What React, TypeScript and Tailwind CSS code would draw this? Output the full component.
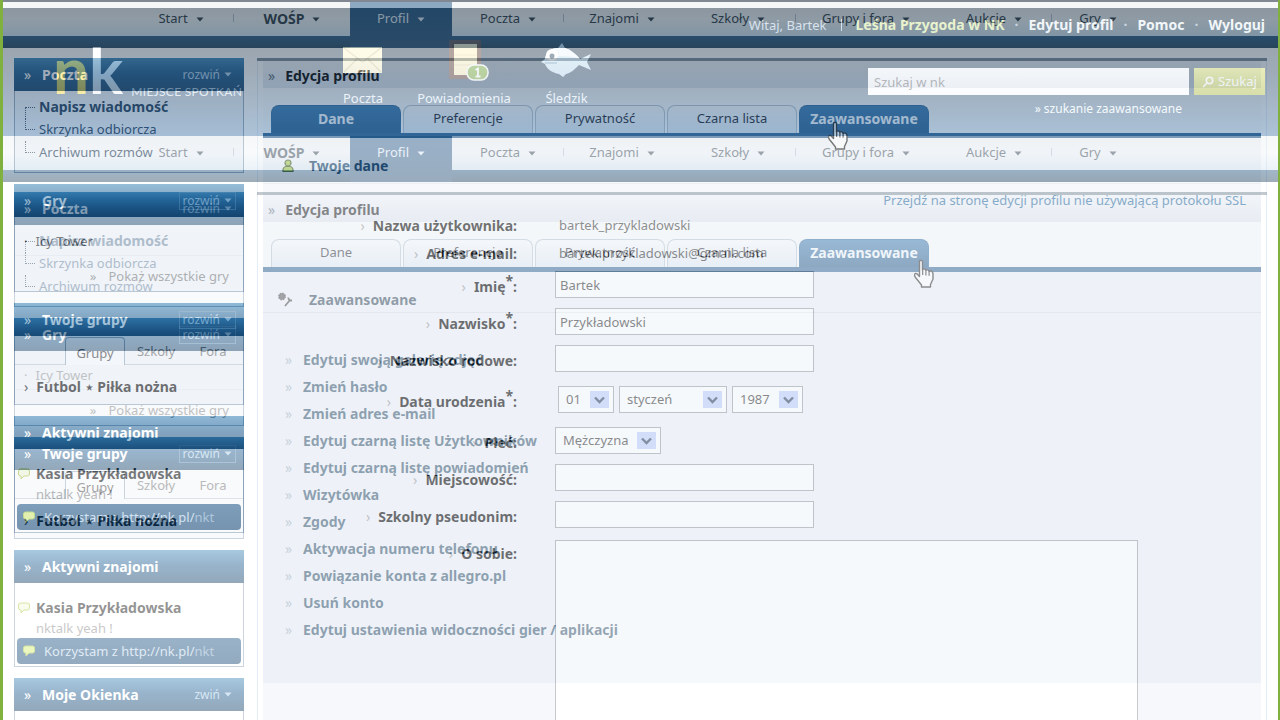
import React from "react";

interface Tab {
  label: string;
  active?: boolean;
  pointer?: string;
}

interface NavEntry {
  label: string;
  width: string;
  bold?: boolean;
  active?: boolean;
  divider?: boolean;
}

const navItems: NavEntry[] = [
  { label: "Start", width: "w-[106px]", divider: true },
  { label: "WOŚP", width: "w-[116px]", bold: true },
  { label: "Profil", width: "w-[102px]", active: true },
  { label: "Poczta", width: "w-[112px]", divider: true },
  { label: "Znajomi", width: "w-[116px]" },
  { label: "Szkoły", width: "w-[116px]", divider: true },
  { label: "Grupy i fora", width: "w-[140px]" },
  { label: "Aukcje", width: "w-[116px]", divider: true },
  { label: "Gry", width: "w-[92px]" },
];

const advancedLinks = [
  "Edytuj swoją galerię zdjęć",
  "Zmień hasło",
  "Zmień adres e-mail",
  "Edytuj czarną listę Użytkowników",
  "Edytuj czarną listę powiadomień",
  "Wizytówka",
  "Zgody",
  "Aktywacja numeru telefonu",
  "Powiązanie konta z allegro.pl",
  "Usuń konto",
  "Edytuj ustawienia widoczności gier / aplikacji",
];

const Caret = () => (
  <svg width="8" height="5" viewBox="0 0 8 5" fill="currentColor" className="shrink-0">
    <path d="M0.500 0.500H7.500L4 4.500Z" />
  </svg>
);

const HandPointer = () => (
  <svg width="22" height="30" viewBox="0 0 22 30" aria-hidden="true">
    <path
      d="M6.5 2.5C6.5 1 9.5 1 9.5 2.5V11L10 10.2C10.8 9.6 12.6 9.8 12.8 11.2C13.6 10.4 15.8 10.6 16 12.4C17 11.6 19.8 12 20 14.5V20L17.5 25.5V28H8.5V26L2.5 18.5C0.5 15.8 2 13.6 3.6 14.6L6.5 17.5Z"
      fill="#fff"
      stroke="#111"
      strokeWidth="1.4"
      strokeLinejoin="round"
    />
    <path d="M9.7 11V16M12.9 11.6V16.4M16.1 12.6V16.8" stroke="#111" strokeWidth="1.2" />
  </svg>
);

const MainNav = () => (
  <nav>
    <div className="flex h-[34px] bg-linear-to-b from-[#eef0f1] via-[#f2f6f8] to-[#d4e5f0] pl-[125px] text-[13px]">
      {navItems.map((item) =>
        item.active ? (
          <a key={item.label} href="#" className={`${item.width} flex h-[46px] items-center justify-center gap-2 bg-linear-to-b from-[#2f6291] to-[#33587a] pb-3 text-[#e4eff8]`}>
            {item.label} <Caret />
          </a>
        ) : (
          <a key={item.label} href="#" className={`${item.width} relative flex items-center justify-center gap-2 text-[#33414c] ${item.bold ? "text-sm font-bold" : ""}`}>
            {item.label} <Caret />
            {item.divider && <span className="absolute right-0 top-3 h-2 w-px bg-[#b3bfc9]" />}
          </a>
        )
      )}
    </div>
    <div className="h-3 bg-linear-to-b from-[#33618a] to-[#2c4b63]" />
  </nav>
);

const SiteHeader = () => (
  <header className="border-t-2 border-[#777f8c] pt-[6px]">
    <div className="flex h-32 justify-between bg-linear-to-b from-[#14293a] via-[#2b4661] to-[#4c7cab] pr-[13px] text-white">
      <div className="flex pl-[50px] pt-[26px] font-['Lato',sans-serif] font-bold">
        <span className="text-[64px] leading-[72px] text-[#ffe14a]">n</span>
        <span className="text-[64px] leading-[72px]">k</span>
        <span className="mt-12 pl-2 text-xs font-normal leading-5 tracking-wide text-[#dbe7f2]">MIEJSCE SPOTKAŃ</span>
      </div>
      <div className="flex flex-col items-end">
        <div className="flex items-center gap-[10px] pt-[7px] text-sm font-bold leading-5">
          <span className="text-[13px] font-normal text-[#c8d6e4]">Witaj, Bartek</span>
          <span className="mx-1 h-3 w-px bg-[#c8d6e4]" />
          <a href="#" className="text-[#eaf7a0]">Leśna Przygoda w NK</a>
          <span className="text-[#9fb6cc]">·</span>
          <a href="#">Edytuj profil</a>
          <span className="text-[#9fb6cc]">·</span>
          <a href="#">Pomoc</a>
          <span className="text-[#9fb6cc]">·</span>
          <a href="#">Wyloguj</a>
        </div>
        <form className="flex gap-[5px] pt-[33px] text-[13px]">
          <input aria-label="Szukaj w nk" placeholder="Szukaj w nk" className="h-[27px] w-[321px] bg-[#fcfeff] px-[6px] placeholder:text-[#777]" />
          <button type="button" className="flex h-[27px] w-[71px] items-center justify-center gap-1 bg-linear-to-b from-[#cfd86a] to-[#aebb48]">
            <svg width="12" height="12" viewBox="0 0 12 12" fill="none" stroke="#fff" strokeWidth="1.6">
              <circle cx="7.5" cy="4.5" r="3.2" />
              <path d="M5 7L1 11" />
            </svg>
            Szukaj
          </button>
        </form>
        <a href="#" className="mr-[83px] pt-1 text-xs leading-5 text-[#eef6fc]">» szukanie zaawansowane</a>
      </div>
    </div>
    {/* shortcuts */}
    <div className="absolute left-[314px] top-10 flex text-[13px] leading-5 text-[#dce8f4]">
      <a href="#" className="flex w-[92px] flex-col items-center">
        <svg width="40" height="48" viewBox="0 0 40 48">
          <rect x="0" y="7" width="39" height="26" fill="#fff8cf" />
          <path d="M1 8L19.500 22L38 8M1 32L14 19M38 32L25 19" fill="none" stroke="#d8cd9c" strokeWidth="1.2" />
        </svg>
        Poczta
      </a>
      <a href="#" className="flex w-[110px] flex-col items-center">
        <svg width="50" height="48" viewBox="0 0 50 48">
          <rect x="10" y="0" width="32" height="39" rx="2" fill="#5b3d33" />
          <rect x="15" y="4" width="23" height="31" fill="#fff3c4" />
          <path d="M15 15H38M15 25H38" stroke="#e6d7a8" />
          <rect x="28" y="25" width="21" height="15" rx="7" fill="#7fae3f" stroke="#fff" strokeWidth="1.500" />
          <path d="M36.500 30L39 28.500V36M36.500 36.500H41.500" fill="none" stroke="#fff" strokeWidth="1.800" />
        </svg>
        Powiadomienia
      </a>
      <a href="#" className="flex w-[95px] flex-col items-center">
        <svg width="52" height="48" viewBox="0 0 52 48">
          <path d="M17 8L21 3L24 8C30 10 35 14 39 19L50 14L46 22L50 30L38 25C34 29 30 33 25 34L22 37L18 34C11 33 5 28 4 24L0 22L4 19C5 12 10 8 17 8Z" fill="#c9e4f5" />
          <path d="M4 19C5 12 10 8 17 8H24C30 10 35 14 39 19C28 15 14 15 4 19Z" fill="#eef8fd" />
          <circle cx="11" cy="15" r="6" fill="#fff" />
          <circle cx="11" cy="16" r="2.500" fill="#2b4860" />
          <path d="M4 23H16" stroke="#5a87a8" fill="none" />
        </svg>
        Śledzik
      </a>
    </div>
  </header>
);

interface BoxProps {
  title: string;
  action?: string;
  framed?: boolean;
  children?: React.ReactNode;
}

const SideBox: React.FC<BoxProps> = ({ title, action, framed, children }) => (
  <section className="border border-[#8fa4ba] bg-[#f0f4f9]">
    <h2 className="-mx-px -mt-px flex h-[33px] items-center bg-linear-to-b from-[#4089bb] via-[#1d5c90] via-45% to-[#133f66] pl-[10px] pr-2 text-sm font-bold text-white">
      <span className="w-[18px] font-normal leading-4">»</span>
      {title}
      {action && (
        <button
          type="button"
          className={`ml-auto flex h-[18px] items-center gap-1 border px-[3px] text-xs font-normal text-[#a9cbe6] ${framed ? "border-[#4c80aa]" : "border-transparent"}`}
        >
          {action} <Caret />
        </button>
      )}
    </h2>
    {children}
  </section>
);

const Bubble: React.FC<{ outline?: boolean }> = ({ outline }) => (
  <svg width="12" height="12" viewBox="0 0 12 12" className="shrink-0">
    <path
      d="M2.500 1H9.500Q11.500 1 11.500 3V6Q11.500 8 9.500 8H6L3 11V8H2.500Q0.500 8 0.500 6V3Q0.500 1 2.500 1Z"
      fill={outline ? "#f2f9d8" : "#d5ee72"}
      stroke="#a5c83a"
    />
  </svg>
);

const Sidebar: React.FC<{ full?: boolean }> = ({ full }) => (
  <aside className="flex w-[230px] shrink-0 flex-col gap-[11px] text-[13px]">
    <SideBox title="Poczta" action="rozwiń">
      <ul className={`h-[81px] pl-[10px] pt-1 leading-[23px] ${full ? "text-[#5f7b95]" : "text-[#12304e]"}`}>
        {["Napisz wiadomość", "Skrzynka odbiorcza", "Archiwum rozmów"].map((text, i) => (
          <li key={text} className="flex h-[23px]">
            <span className={`mr-1 h-3 w-[10px] border-l border-dotted border-[#33475a] ${i === 0 ? "mt-3 border-t" : "border-b"}`} />
            <a href="#" className={i === 0 ? "text-sm font-bold leading-[23px]" : ""}>{text}</a>
          </li>
        ))}
      </ul>
    </SideBox>
    <SideBox title="Gry" action="rozwiń" framed>
      <div className={`h-[74px] pt-[14px] leading-5 ${full ? "text-[#888]" : "text-[#222]"}`}>
        <a href="#" className="flex gap-2 border-b border-[#e2e8ef] pb-1 pl-[9px]">
          <span>·</span>Icy Tower
        </a>
        <a href="#" className="flex justify-end gap-3 pr-[14px] pt-[10px] text-[#777]">
          <span>»</span>Pokaż wszystkie gry
        </a>
      </div>
    </SideBox>
    <SideBox title="Twoje grupy" action="rozwiń" framed>
      <div className="h-[68px] text-[#666]">
        <div className="flex h-[29px] items-end border-b border-[#b6c3d0] pl-[50px]">
          <button type="button" className="-mb-px h-7 w-[60px] rounded-t border border-b-0 border-[#8ba3ba] bg-[#f6f8fb] pt-1 text-[#333]">Grupy</button>
          <button type="button" className="h-7 w-[62px] pt-1">Szkoły</button>
          <button type="button" className="h-7 w-[52px] pt-1">Fora</button>
        </div>
        <a href="#" className="flex gap-2 pl-[9px] pt-3 text-sm font-bold leading-5 text-black">
          <span className="font-normal">›</span>Futbol ⋆ Piłka nożna
        </a>
      </div>
    </SideBox>
    <SideBox title="Aktywni znajomi">
      <div className="h-[83px] bg-white px-[2px] pt-[15px] leading-5">
        <div className="flex items-center gap-[6px] pl-px text-sm font-bold leading-5 text-[#111]">
          <Bubble outline /> Kasia Przykładowska
        </div>
        <p className="pl-[19px] text-[#888]">nktalk yeah !</p>
        <a href="#" className="flex h-[26px] items-center gap-[9px] rounded-sm bg-linear-to-b from-[#1f5787] to-[#124472] pl-[6px] text-[#bdd5ea]">
          <Bubble />
          <span>Korzystam z http://nk.pl/<span className="text-[#7ba3c6]">nkt</span></span>
        </a>
      </div>
    </SideBox>
    {full && (
      <SideBox title="Moje Okienka" action="zwiń">
        <div className="h-10 bg-white" />
      </SideBox>
    )}
  </aside>
);

interface PanelProps {
  tabs: Tab[];
  children: React.ReactNode;
}

const Panel: React.FC<PanelProps> = ({ tabs, children }) => (
  <main className="min-w-0 grow border-x border-[#e2edf8] px-[5px]">
    <div className="-mx-[6px] h-[3px] bg-[#7d8a96]" />
    <h1 className="flex h-[27px] items-center gap-[10px] bg-linear-to-b from-[#f4f7fa] to-[#dfe5ee] pl-[5px] pt-[2px] text-sm font-bold text-black">
      <span className="font-normal text-[#567]">»</span>
      Edycja profilu
    </h1>
    <div className="flex gap-[2px] border-b-[5px] border-[#1b5588] bg-[#fafcfd] pl-2 pt-[17px]">
      {tabs.map((tab) => (
        <div key={tab.label} className="relative">
          <button
            type="button"
            className={`block h-7 w-[130px] rounded-t-lg border border-b-0 pb-[2px] ${
              tab.active
                ? "border-[#1d5f98] bg-linear-to-b from-[#2f74ae] to-[#164e80] text-sm font-bold text-[#f2f8fd]"
                : "border-[#b3c2d0] bg-linear-to-b from-[#fafcfe] to-[#dfeaf4] text-[13px] text-[#112]"
            }`}
          >
            {tab.label}
          </button>
          {tab.pointer && (
            <span className={`absolute ${tab.pointer}`}>
              <HandPointer />
            </span>
          )}
        </div>
      ))}
    </div>
    {children}
  </main>
);

interface RowProps {
  label: string;
  id?: string;
  required?: boolean;
  children: React.ReactNode;
}

const Row: React.FC<RowProps> = ({ label, id, required, children }) => (
  <div className="flex gap-[38px]">
    <label htmlFor={id} className="flex w-[254px] shrink-0 justify-end pt-[6px] text-sm font-bold leading-5 text-black">
      <span className="mr-2 font-normal text-[#999]">›</span>
      {label}
      {required && <sup className="-top-1 text-sm leading-4">*</sup>}:
    </label>
    {children}
  </div>
);

const Field: React.FC<{ id: string; value?: string }> = ({ id, value }) => (
  <input id={id} defaultValue={value} className="h-[27px] w-[259px] border border-[#9a9fa5] bg-white px-1 text-[#333]" />
);

const Picker: React.FC<{ id?: string; label: string; value: string; width: string }> = ({ id, label, value, width }) => (
  <span className={`relative ${width}`}>
    <select id={id} aria-label={label} className="h-[27px] w-full appearance-none border border-[#9a9fa5] bg-white pl-[7px] text-[#333]">
      <option>{value}</option>
    </select>
    <span className="pointer-events-none absolute right-[5px] top-[5px] flex h-[17px] w-[19px] items-center justify-center bg-[#bccefb]">
      <svg width="11" height="8" viewBox="0 0 11 8" fill="none" stroke="#2b3c5c" strokeWidth="2.400">
        <path d="M1 1.500L5.500 6L10 1.500" />
      </svg>
    </span>
  </span>
);

const ProfileForm = () => (
  <form className="bg-[#f0f3f8] text-[13px]">
    <h2 className="flex h-[46px] items-center gap-[15px] border-b border-[#dfe5ec] pl-[19px] pt-[10px] text-sm font-bold text-[#0f3a60]">
      <svg width="12" height="14" viewBox="0 0 12 14" fill="#a8c845" stroke="#43571e" strokeWidth="1.200">
        <path d="M1 12.500Q0.500 8 4 7.500H8Q11.500 8 11 12.500Z" />
        <circle cx="6" cy="4" r="3" />
      </svg>
      Twoje dane
    </h2>
    <div className="pr-[15px] pt-[6px] text-right leading-5">
      <a href="#" className="text-[#2f70a3]">Przejdź na stronę edycji profilu nie używającą protokołu SSL</a>
    </div>
    <div className="flex flex-col gap-[10px]">
      <div className="flex h-[51px] flex-col gap-[2px]">
        <Row label="Nazwa użytkownika">
          <span className="pl-1 pt-[5px] leading-5 text-[#333]">bartek_przykladowski</span>
        </Row>
        <Row label="Adres e-mail">
          <span className="pl-1 pt-[5px] leading-5 text-[#333]">bartek.przykladowski@gmail.com</span>
        </Row>
      </div>
      <Row label="Imię" id="imie" required><Field id="imie" value="Bartek" /></Row>
      <Row label="Nazwisko" id="nazwisko" required><Field id="nazwisko" value="Przykładowski" /></Row>
      <Row label="Nazwisko rodowe" id="rodowe"><Field id="rodowe" /></Row>
      <div className="py-1">
        <Row label="Data urodzenia" id="dzien" required>
          <div className="flex gap-[5px] pl-[3px]">
            <Picker id="dzien" label="Dzień" value="01" width="w-14" />
            <Picker label="Miesiąc" value="styczeń" width="w-[108px]" />
            <Picker label="Rok" value="1987" width="w-[71px]" />
          </div>
        </Row>
      </div>
      <Row label="Płeć" id="plec"><Picker id="plec" label="Płeć" value="Mężczyzna" width="w-[106px]" /></Row>
      <Row label="Miejscowość" id="miasto"><Field id="miasto" /></Row>
      <Row label="Szkolny pseudonim" id="pseudonim"><Field id="pseudonim" /></Row>
      <Row label="O sobie" id="osobie">
        <textarea id="osobie" className="mr-[123px] mt-[2px] h-60 grow resize-none border border-[#9a9fa5] bg-white" />
      </Row>
    </div>
  </form>
);

const AdvancedList = () => (
  <div className="bg-[#edf2f8] pb-10 text-sm font-bold">
    <h2 className="flex h-[41px] items-center gap-4 border-b border-[#d5dce4] pl-[14px] pt-4 text-[#1a3448]">
      <svg width="16" height="16" viewBox="0 0 16 16" fill="none" stroke="#333">
        <circle cx="5" cy="4.500" r="3.200" fill="#444" strokeWidth="1.500" strokeDasharray="1.500 1" />
        <path d="M8 14L13 8M11.500 5.500Q11 8.500 15 8.500" strokeWidth="1.800" />
      </svg>
      Zaawansowane
    </h2>
    <ul className="pl-[22px] pt-[33px] leading-[27px]">
      {advancedLinks.map((link) => (
        <li key={link} className="flex">
          <span className="w-[18px] font-normal text-[#9ab]">»</span>
          <a href="#" className="text-[#143c5a]">{link}</a>
        </li>
      ))}
    </ul>
  </div>
);

const formTabs: Tab[] = [
  { label: "Dane", active: true },
  { label: "Preferencje" },
  { label: "Prywatność" },
  { label: "Czarna lista" },
  { label: "Zaawansowane", active: true, pointer: "left-7 top-4" },
];

const advancedTabs: Tab[] = [
  { label: "Dane" },
  { label: "Preferencje" },
  { label: "Prywatność" },
  { label: "Czarna lista" },
  { label: "Zaawansowane", active: true, pointer: "left-[114px] top-5" },
];

const App = () => {
  return (
    <div className="grid h-screen grid-cols-1 overflow-hidden bg-white font-['Noto_Sans',sans-serif]">
      {/* outgoing page, scrolled past its header */}
      <div className="col-start-1 row-start-1 h-screen overflow-hidden border-l-[3px] border-r-2 border-[#80b03e] bg-white">
        <div className="h-[2px] bg-[#8b9098]" />
        <MainNav />
        <div className="flex gap-[13px] px-[11px] pt-[10px]">
          <Sidebar />
          <Panel tabs={formTabs}><ProfileForm /></Panel>
        </div>
      </div>
      {/* incoming page, not quite halfway through the cross-fade */}
      <div className="relative col-start-1 row-start-1 h-screen overflow-hidden border-l-[3px] border-r-2 border-[#80b03e] bg-white opacity-45">
        <SiteHeader />
        <MainNav />
        <div className="flex gap-[13px] px-[11px] pt-[10px]">
          <Sidebar full />
          <Panel tabs={advancedTabs}><AdvancedList /></Panel>
        </div>
      </div>
    </div>
  );
};

export default App;
